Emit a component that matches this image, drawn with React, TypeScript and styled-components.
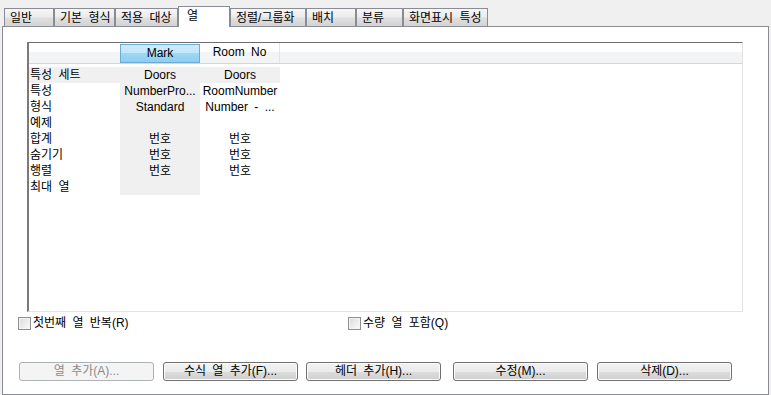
import React from "react";
import styled, { createGlobalStyle } from "styled-components";

const GlobalStyle = createGlobalStyle`
  html, body { margin: 0; padding: 0; background: #f0f0f0; }
  body {
    font-family: "Liberation Sans", "Noto Sans CJK KR", sans-serif;
    font-size: 12px;
    word-spacing: 3px;
    color: #000;
  }
`;

const Window = styled.div`
  width: 771px;
  height: 395px;
  background: #f0f0f0;
  overflow: hidden;
`;

const TabStrip = styled.div`
  display: flex;
  align-items: flex-end;
  height: 26px;
  padding-left: 4px;
  box-sizing: border-box;
`;

const Tab = styled.div<{ $w: number; $active?: boolean }>`
  box-sizing: border-box;
  width: ${(p) => p.$w}px;
  height: ${(p) => (p.$active ? 21 : 18)}px;
  margin-bottom: ${(p) => (p.$active ? -1 : 0)}px;
  position: relative;
  z-index: ${(p) => (p.$active ? 1 : 0)};
  border: 1px solid #898c95;
  border-bottom: none;
  background: ${(p) =>
    p.$active
      ? "#ffffff"
      : "linear-gradient(to bottom, #f6f6f6 0%, #ececec 45%, #dfdfdf 55%, #d3d3d3 100%)"};
  padding: 1px 0 0 ${(p) => (p.$active ? 8 : 5)}px;
  line-height: 16px;
  white-space: nowrap;
`;

const Panel = styled.div`
  box-sizing: border-box;
  width: 767px;
  height: 369px;
  margin-left: 2px;
  border: 1px solid #898c95;
  background: #ffffff;
  display: flex;
  flex-direction: column;
`;

const ListView = styled.div`
  box-sizing: border-box;
  width: 716px;
  height: 270px;
  margin: 15px 0 0 24px;
  border-style: solid;
  border-width: 1px 1px 1px 2px;
  border-color: #6d6d6d #e3e3e3 #e3e3e3 #7a7a7a;
  background: #ffffff;
  display: flex;
  flex-direction: column;
`;

const HeaderRow = styled.div`
  display: flex;
  height: 21px;
  box-sizing: border-box;
  border-bottom: 1px solid #d5d5d5;
  background: linear-gradient(to bottom, #ffffff 0%, #ffffff 45%, #f3f4f6 46%, #f3f4f6 100%);
`;

const HeaderCell = styled.div<{ $w: number; $selected?: boolean; $sep?: boolean }>`
  box-sizing: border-box;
  width: ${(p) => p.$w}px;
  height: 20px;
  line-height: 19px;
  text-align: center;
  white-space: nowrap;
  border-right: ${(p) => (p.$sep ? "1px solid #e3e4e6" : "none")};
  ${(p) =>
    p.$selected &&
    `
    margin-top: 1px;
    height: 19px;
    line-height: 17px;
    border: 1px solid #6cacd4;
    background: linear-gradient(to bottom, #cdeafb 0%, #c3e6fa 45%, #9ed7f4 50%, #8ccff0 100%);
  `}
`;

const Body = styled.div`
  padding-top: 3px;
  display: flex;
  flex-direction: column;
`;

const Row = styled.div`
  display: flex;
  height: 16px;
  line-height: 16px;
`;

const LabelCell = styled.div<{ $shaded?: boolean }>`
  width: 91px;
  padding-left: 1px;
  box-sizing: border-box;
  white-space: nowrap;
  background: ${(p) => (p.$shaded ? "#f0f0f0" : "transparent")};
`;

const ValueCell = styled.div<{ $shaded?: boolean }>`
  width: 80px;
  text-align: center;
  white-space: nowrap;
  overflow: hidden;
  background: ${(p) => (p.$shaded ? "#f0f0f0" : "transparent")};
`;

const CheckRow = styled.div`
  display: grid;
  grid-template-columns: 330px auto;
  padding-left: 15px;
  margin-top: 5px;
`;

const CheckItem = styled.label`
  display: flex;
  align-items: center;
  gap: 2px;
  height: 13px;
  line-height: 13px;
  white-space: nowrap;
`;

const CheckBox = styled.span`
  display: inline-block;
  box-sizing: border-box;
  width: 13px;
  height: 13px;
  border: 1px solid #8e8f8f;
  background: linear-gradient(135deg, #d8dadd 0%, #eeeeee 60%, #fbfbfb 100%);
  box-shadow: inset 0 0 0 1px #f4f4f4;
`;

const ButtonRow = styled.div`
  display: grid;
  grid-template-columns: 144px 143px 147px 144px 135px;
  padding-left: 16px;
  margin-top: 32px;
`;

const Button = styled.div<{ $disabled?: boolean }>`
  box-sizing: border-box;
  width: 135px;
  height: 19px;
  line-height: 17px;
  text-align: center;
  border-radius: 3px;
  white-space: nowrap;
  border: 1px solid ${(p) => (p.$disabled ? "#adb2b5" : "#707070")};
  color: ${(p) => (p.$disabled ? "#8a8a8a" : "#000")};
  background: ${(p) =>
    p.$disabled
      ? "#f4f4f4"
      : "linear-gradient(to bottom, #f2f2f2 0%, #ebebeb 50%, #dddddd 51%, #cfcfcf 100%)"};
  box-shadow: ${(p) => (p.$disabled ? "none" : "inset 0 0 0 1px #fcfcfc")};
`;

const tabs: { label: string; w: number; active?: boolean }[] = [
  { label: "일반", w: 50 },
  { label: "기본 형식", w: 61 },
  { label: "적용 대상", w: 63 },
  { label: "열", w: 52, active: true },
  { label: "정렬/그룹화", w: 76 },
  { label: "배치", w: 50 },
  { label: "분류", w: 47 },
  { label: "화면표시 특성", w: 85 },
];

const rows: { label: string; mark: string; room: string; shaded?: boolean }[] = [
  { label: "특성 세트", mark: "Doors", room: "Doors", shaded: true },
  { label: "특성", mark: "NumberPro...", room: "RoomNumber" },
  { label: "형식", mark: "Standard", room: "Number - ..." },
  { label: "예제", mark: "", room: "" },
  { label: "합계", mark: "번호", room: "번호" },
  { label: "숨기기", mark: "번호", room: "번호" },
  { label: "행렬", mark: "번호", room: "번호" },
  { label: "최대 열", mark: "", room: "" },
];

const buttons: { label: string; disabled?: boolean }[] = [
  { label: "열 추가(A)...", disabled: true },
  { label: "수식 열 추가(F)..." },
  { label: "헤더 추가(H)..." },
  { label: "수정(M)..." },
  { label: "삭제(D)..." },
];

export default function App() {
  return (
    <Window>
      <GlobalStyle />
      <TabStrip>
        {tabs.map((t) => (
          <Tab key={t.label} $w={t.w} $active={t.active}>
            {t.label}
          </Tab>
        ))}
      </TabStrip>
      <Panel>
        <ListView>
          <HeaderRow>
            <HeaderCell $w={91} />
            <HeaderCell $w={80} $selected>
              Mark
            </HeaderCell>
            <HeaderCell $w={80} $sep>
              Room No
            </HeaderCell>
          </HeaderRow>
          <Body>
            {rows.map((r) => (
              <Row key={r.label}>
                <LabelCell $shaded={r.shaded}>{r.label}</LabelCell>
                <ValueCell $shaded>{r.mark}</ValueCell>
                <ValueCell $shaded={r.shaded}>{r.room}</ValueCell>
              </Row>
            ))}
          </Body>
        </ListView>
        <CheckRow>
          <CheckItem>
            <CheckBox />
            첫번째 열 반복(R)
          </CheckItem>
          <CheckItem>
            <CheckBox />
            수량 열 포함(Q)
          </CheckItem>
        </CheckRow>
        <ButtonRow>
          {buttons.map((b) => (
            <Button key={b.label} $disabled={b.disabled}>
              {b.label}
            </Button>
          ))}
        </ButtonRow>
      </Panel>
    </Window>
  );
}
